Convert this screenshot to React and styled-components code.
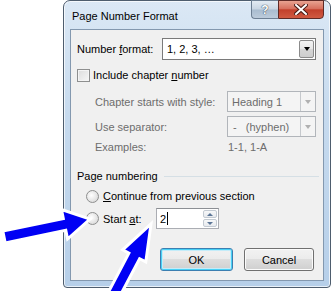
import styled, { createGlobalStyle } from "styled-components";

const GlobalStyle = createGlobalStyle`
  body {
    margin: 0;
    background: #ffffff;
    font-family: "Liberation Sans", Arial, sans-serif;
    font-size: 11px;
    color: #000000;
  }
`;

const Page = styled.div`
  position: relative;
  width: 332px;
  height: 291px;
  overflow: hidden;
  box-sizing: border-box;
  padding-left: 63px;
`;

const Window = styled.div`
  width: 268px;
  height: 288px;
  box-sizing: border-box;
  border: 1px solid #4e5d6e;
  border-radius: 7px 7px 4px 4px;
  background: linear-gradient(180deg, #dbe8f5 0%, #c6daee 40%, #b6cfe9 100%);
  box-shadow: inset 0 0 0 1px rgba(255, 255, 255, 0.7);
  display: flex;
  flex-direction: column;
  padding: 0 6px 6px 6px;
`;

const TitleBar = styled.div`
  height: 28px;
  display: flex;
  align-items: flex-start;
`;

const Title = styled.div`
  padding: 9px 0 0 2px;
  line-height: 13px;
`;

const CaptionButtons = styled.div`
  margin-left: auto;
  margin-top: -1px;
  display: flex;
`;

const HelpButton = styled.div`
  width: 27px;
  height: 19px;
  box-sizing: border-box;
  border: 1px solid #6d7f93;
  border-right: none;
  border-radius: 0 0 0 4px;
  background: linear-gradient(180deg, #e3ebf3 0%, #c9d6e3 48%, #a9bccf 52%, #bccbdb 100%);
  display: flex;
  align-items: center;
  justify-content: center;
  color: #ffffff;
  font-weight: bold;
  font-size: 12px;
  text-shadow: 0 0 1px #2d3e52, 0 0 1px #2d3e52;
`;

const CloseButton = styled.div`
  width: 46px;
  height: 19px;
  box-sizing: border-box;
  border: 1px solid #5e2a26;
  border-radius: 0 0 4px 0;
  background: linear-gradient(180deg, #e8a291 0%, #d6705e 45%, #c2402c 52%, #d05a42 100%);
  display: flex;
  align-items: center;
  justify-content: center;
`;

const Client = styled.div`
  flex: 1;
  background: #f0f0f0;
  border: 1px solid #8398af;
  padding: 0 6px;
  display: flex;
  flex-direction: column;
`;

const Row = styled.div`
  display: flex;
  align-items: center;
  height: ${(p) => p.$h || 14}px;
  margin-top: ${(p) => p.$mt || 0}px;
  padding-left: ${(p) => p.$indent || 0}px;
`;

const Label = styled.span`
  width: ${(p) => (p.$w ? `${p.$w}px` : "auto")};
  flex-shrink: 0;
  color: ${(p) => (p.$disabled ? "#6d6d6d" : "#000000")};
  white-space: nowrap;
`;

const Combo = styled.div`
  width: ${(p) => p.$w}px;
  height: ${(p) => p.$h}px;
  box-sizing: border-box;
  border: 1px solid ${(p) => (p.$disabled ? "#b1b5ba" : "#7a7a7a")};
  background: ${(p) => (p.$disabled ? "#f4f4f4" : "#ffffff")};
  display: flex;
  align-items: center;
  color: ${(p) => (p.$disabled ? "#6d6d6d" : "#000000")};
`;

const ComboText = styled.span`
  flex: 1;
  padding-left: ${(p) => p.$pl || 4}px;
  white-space: pre;
`;

const DropButton = styled.div`
  width: 15px;
  height: 100%;
  box-sizing: border-box;
  display: flex;
  align-items: center;
  justify-content: center;
  ${(p) =>
    p.$disabled
      ? `border-left: 1px solid #c6c9cd; background: #f4f4f4;`
      : `margin: 1px; height: calc(100% - 2px); border: 1px solid #8b8b8b; border-radius: 2px;
         background: linear-gradient(180deg, #f3f3f3 0%, #e6e6e6 50%, #d6d6d6 51%, #cdcdcd 100%);`}
`;

const Triangle = styled.span`
  width: 0;
  height: 0;
  border-left: 3.5px solid transparent;
  border-right: 3.5px solid transparent;
  border-top: 4px solid ${(p) => (p.$disabled ? "#b0b0b0" : "#000000")};
`;

const CheckBox = styled.span`
  width: 13px;
  height: 13px;
  box-sizing: border-box;
  border: 1px solid #8e8f8f;
  background: linear-gradient(135deg, #dcdcdc 0%, #f6f6f6 100%);
  box-shadow: inset 0 0 0 1px #f4f4f4;
  margin-right: 3px;
`;

const Radio = styled.span`
  width: 13px;
  height: 13px;
  box-sizing: border-box;
  border-radius: 50%;
  border: 1px solid #8e8f8f;
  background: radial-gradient(circle at 40% 40%, #ffffff 0%, #e6e6e6 55%, #cfcfcf 100%);
  margin-right: 4px;
  flex-shrink: 0;
`;

const GroupLine = styled.span`
  flex: 1;
  height: 0;
  border-top: 1px solid #d5dfe5;
  margin: 0 -2px 0 6px;
`;

const SpinInput = styled.div`
  width: 63px;
  height: 21px;
  box-sizing: border-box;
  border: 1px solid #abadb3;
  border-top-color: #8c8f94;
  background: #ffffff;
  display: flex;
  align-items: center;
`;

const InputText = styled.span`
  flex: 1;
  padding-left: 3px;
  display: flex;
  align-items: center;
`;

const Caret = styled.span`
  width: 1px;
  height: 13px;
  background: #000000;
  margin-left: 1px;
`;

const Spinner = styled.div`
  width: 15px;
  height: 100%;
  display: flex;
  flex-direction: column;
  padding: 1px 1px 1px 0;
  box-sizing: border-box;
  gap: 1px;
`;

const SpinButton = styled.div`
  flex: 1;
  border: 1px solid #c3cad2;
  border-radius: 2px;
  background: linear-gradient(180deg, #f7f8f9 0%, #e7eaee 100%);
  display: flex;
  align-items: center;
  justify-content: center;
`;

const SpinArrow = styled.span`
  width: 0;
  height: 0;
  border-left: 3px solid transparent;
  border-right: 3px solid transparent;
  ${(p) => (p.$up ? "border-bottom" : "border-top")}: 3px solid #5b7596;
`;

const ButtonRow = styled.div`
  display: flex;
  justify-content: flex-end;
  gap: 11px;
  margin-top: 19px;
  margin-right: 3px;
`;

const Button = styled.div`
  width: ${(p) => p.$w}px;
  height: 23px;
  box-sizing: border-box;
  border: 1px solid #707070;
  border-radius: 3px;
  background: linear-gradient(180deg, #f2f2f2 0%, #ebebeb 49%, #dddddd 50%, #cfcfcf 100%);
  display: flex;
  align-items: center;
  justify-content: center;
  box-shadow: ${(p) =>
    p.$default ? "inset 0 0 0 1px #48d0f5, inset 0 0 0 2px #c4ecf9" : "inset 0 0 0 1px #fbfbfb"};
  border-color: ${(p) => (p.$default ? "#3c7fb1" : "#707070")};
`;

const Overlay = styled.svg`
  position: absolute;
  left: 0;
  top: 0;
  pointer-events: none;
`;

function arrowPoints(tail, tip, shaftHalf, headHalf, headLen) {
  const dx = tip[0] - tail[0];
  const dy = tip[1] - tail[1];
  const len = Math.hypot(dx, dy);
  const ux = dx / len;
  const uy = dy / len;
  const px = -uy;
  const py = ux;
  const bx = tip[0] - ux * headLen;
  const by = tip[1] - uy * headLen;
  const pts = [
    [tail[0] + px * shaftHalf, tail[1] + py * shaftHalf],
    [bx + px * shaftHalf, by + py * shaftHalf],
    [bx + px * headHalf, by + py * headHalf],
    tip,
    [bx - px * headHalf, by - py * headHalf],
    [bx - px * shaftHalf, by - py * shaftHalf],
    [tail[0] - px * shaftHalf, tail[1] - py * shaftHalf],
  ];
  return pts.map((p) => `${p[0].toFixed(1)},${p[1].toFixed(1)}`).join(" ");
}

function Arrow({ tail, tip, shaftHalf, headHalf, headLen }) {
  return (
    <polygon
      points={arrowPoints(tail, tip, shaftHalf, headHalf, headLen)}
      fill="#0000f4"
      stroke="#ffffff"
      strokeWidth="3"
      strokeLinejoin="miter"
    />
  );
}

export default function App() {
  return (
    <>
      <GlobalStyle />
      <Page>
        <Window>
          <TitleBar>
            <Title>Page Number Format</Title>
            <CaptionButtons>
              <HelpButton>?</HelpButton>
              <CloseButton>
                <svg width="14" height="11" viewBox="0 0 14 11">
                  <path
                    d="M2 1 L12 10 M12 1 L2 10"
                    stroke="#4a1a14"
                    strokeWidth="4"
                    strokeLinecap="square"
                  />
                  <path
                    d="M2 1 L12 10 M12 1 L2 10"
                    stroke="#ffffff"
                    strokeWidth="2"
                    strokeLinecap="square"
                  />
                </svg>
              </CloseButton>
            </CaptionButtons>
          </TitleBar>
          <Client>
            <Row $h={22} $mt={8}>
              <Label $w={85}>
                Number <u>f</u>ormat:
              </Label>
              <Combo $w={154} $h={22}>
                <ComboText>1, 2, 3, …</ComboText>
                <DropButton>
                  <Triangle />
                </DropButton>
              </Combo>
            </Row>
            <Row $h={14} $mt={8}>
              <CheckBox />
              <Label>
                Include chapter <u>n</u>umber
              </Label>
            </Row>
            <Row $h={21} $mt={9} $indent={18}>
              <Label $w={132} $disabled>
                Chapter starts with style:
              </Label>
              <Combo $w={89} $h={21} $disabled>
                <ComboText>Heading 1</ComboText>
                <DropButton $disabled>
                  <Triangle $disabled />
                </DropButton>
              </Combo>
            </Row>
            <Row $h={21} $mt={4} $indent={18}>
              <Label $w={132} $disabled>
                Use separator:
              </Label>
              <Combo $w={89} $h={21} $disabled>
                <ComboText $pl={5}>{"-   (hyphen)"}</ComboText>
                <DropButton $disabled>
                  <Triangle $disabled />
                </DropButton>
              </Combo>
            </Row>
            <Row $h={14} $mt={3} $indent={18}>
              <Label $w={133} $disabled>
                Examples:
              </Label>
              <Label $disabled>1-1, 1-A</Label>
            </Row>
            <Row $h={14} $mt={15}>
              <Label>Page numbering</Label>
              <GroupLine />
            </Row>
            <Row $h={14} $mt={6} $indent={9}>
              <Radio />
              <Label>
                <u>C</u>ontinue from previous section
              </Label>
            </Row>
            <Row $h={21} $mt={5} $indent={9}>
              <Radio />
              <Label $w={53}>
                Start <u>a</u>t:
              </Label>
              <SpinInput>
                <InputText>
                  2<Caret />
                </InputText>
                <Spinner>
                  <SpinButton>
                    <SpinArrow $up />
                  </SpinButton>
                  <SpinButton>
                    <SpinArrow />
                  </SpinButton>
                </Spinner>
              </SpinInput>
            </Row>
            <ButtonRow>
              <Button $w={73} $default>
                OK
              </Button>
              <Button $w={70}>Cancel</Button>
            </ButtonRow>
          </Client>
        </Window>
        <Overlay width="332" height="291" viewBox="0 0 332 291">
          <Arrow tail={[4, 237]} tip={[90, 219]} shaftHalf={6} headHalf={15} headLen={26} />
          <Arrow tail={[110, 302]} tip={[151, 224]} shaftHalf={6} headHalf={13} headLen={36} />
        </Overlay>
      </Page>
    </>
  );
}
